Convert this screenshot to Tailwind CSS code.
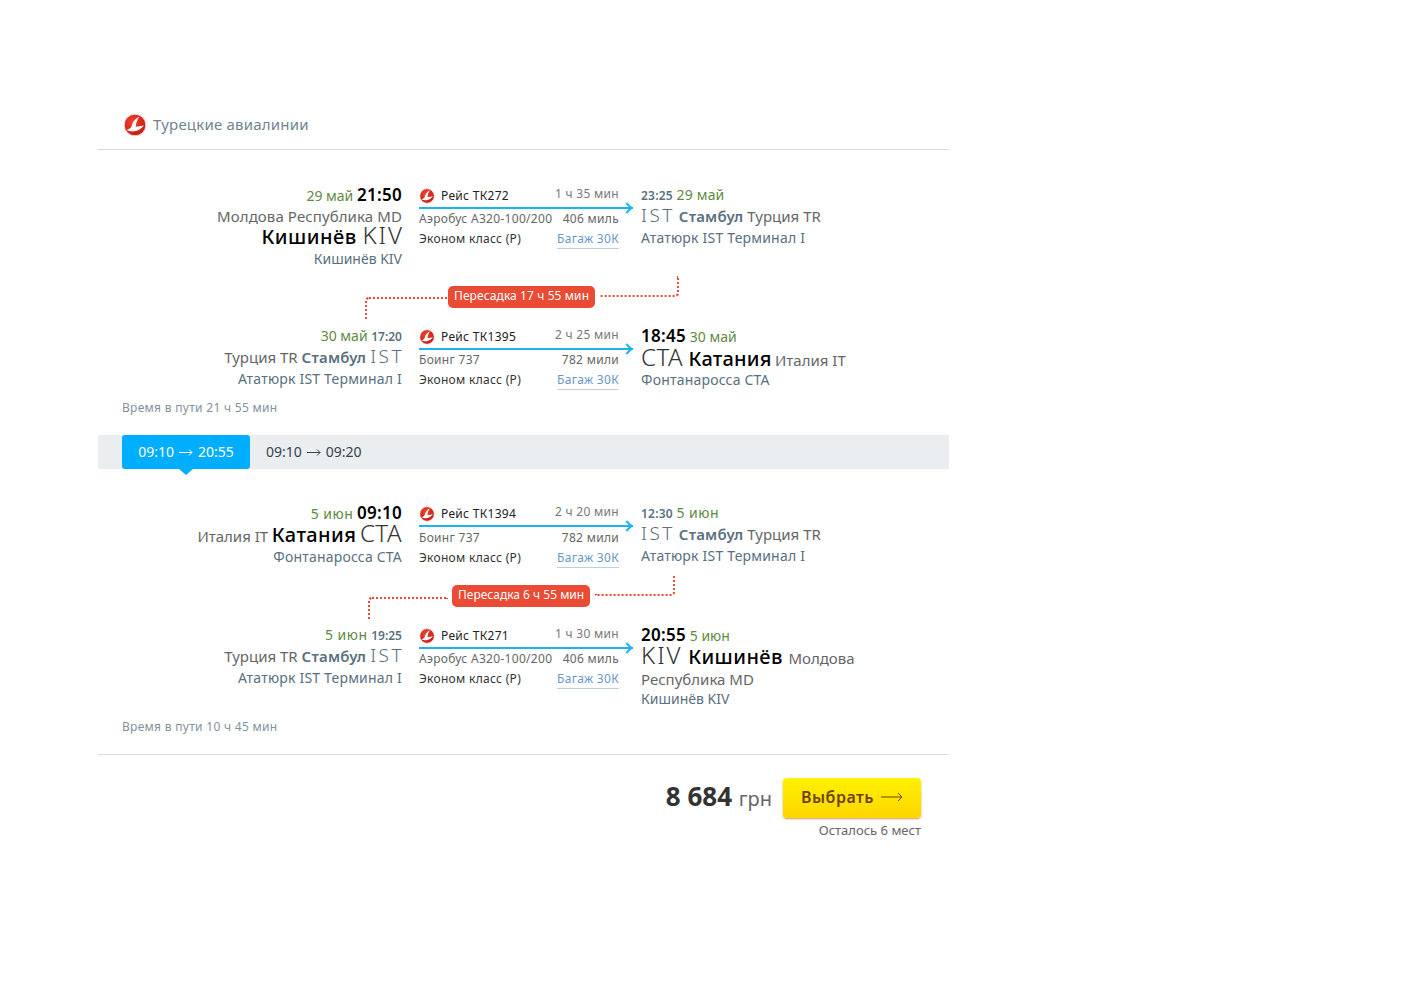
<!DOCTYPE html>
<html lang="ru">

<head>
  <meta charset="UTF-8" />
  <title>Турецкие авиалинии</title>
  <script src="https://cdn.jsdelivr.net/npm/@tailwindcss/browser@4"></script>
</head>

<body class="bg-white font-['Noto_Sans',sans-serif] text-[#555]">
  <svg class="absolute w-0 h-0">
    <defs>
      <radialGradient id="tkred" cx="40%" cy="35%" r="70%">
        <stop offset="0" stop-color="#f2442f" />
        <stop offset="1" stop-color="#c9140f" />
      </radialGradient>
    </defs>
    <symbol id="tk" viewBox="0 0 24 24">
      <circle cx="12" cy="12" r="10.800" fill="url(#tkred)" stroke="#eadcda" stroke-width="1" />
      <path d="M3.500 16.800c2-.3 4-1.300 5-3.300 1-4 3-7.500 8-10-2.500 3.500-3.500 6.500-3.700 10.300l8.200-1.300c-3 3.500-6 5.300-10 5.800-3 .3-5.500-.3-7.500-1.500z" fill="#fff" />
    </symbol>
  </svg>

  <div class="w-[851px] ml-[98px] pt-[110px]">
    <div class="h-[40px] border-b border-[#d5dadc] flex items-start pl-[25px] pt-[3px] gap-[6px]">
      <svg class="w-[24px] h-[24px]"><use href="#tk" /></svg>
      <span class="text-[15px] leading-[22px] tracking-[0.2px] text-[#708591]">Турецкие авиалинии</span>
    </div>

    <!-- туда -->
    <div class="flex h-[100px] mt-[36px]">
      <div class="w-[304px] text-right">
        <div class="h-[20px] leading-[18px] text-[14px]"><span class="text-[#5f8a45]">29 май</span> <span class="text-[17px] leading-none tracking-[0.3px] font-semibold text-black">21:50</span></div>
        <div class="h-[20px] leading-[20px] text-[15px] tracking-[0.1px] text-[#666]">Молдова Республика MD</div>
        <div class="h-[26px] -mt-[3px] leading-[14px] text-[20px] font-medium tracking-[0.5px] text-black">Кишинёв <span class="font-light leading-none text-[#333] text-[24px] tracking-[2px] -mr-[2px]">KIV</span></div>
        <div class="h-[22px] leading-[20px] text-[14px] text-[#5a7080]">Кишинёв KIV</div>
      </div>
      <div class="w-[214px] ml-[17px]">
        <div class="h-[20px] flex items-center justify-between pr-[14px]">
          <span class="flex items-center gap-[6px] text-[12px] tracking-[0.3px] text-[#222]"><svg class="w-[16px] h-[16px]"><use href="#tk" /></svg>Рейс ТК272</span>
          <span class="text-[12px] tracking-[0.3px] text-[#777] -mt-[4px]">1 ч 35 мин</span>
        </div>
        <div class="h-[2px] bg-[#1cb3f5] relative mt-[1px]"><span class="absolute right-[2px] top-[-3px] w-[8px] h-[8px] border-t-2 border-r-2 border-[#1cb3f5] rotate-45"></span></div>
        <div class="flex justify-between pr-[14px] h-[20px] leading-[20px] text-[12px] tracking-[0.3px] text-[#666]"><span>Аэробус А320-100/200</span><span>406 миль</span></div>
        <div class="flex justify-between pr-[14px] h-[20px] leading-[20px] text-[12px] tracking-[0.3px] text-[#333]"><span>Эконом класс (P)</span><span class="text-[#6896c5] border-b border-[#bcd0e0] h-[20px]">Багаж 30К</span></div>
      </div>
      <div class="ml-[8px] w-[240px]">
        <div class="h-[20px] leading-[18px] text-[14px]"><span class="text-[12px] tracking-[0.2px] font-semibold text-[#5a7080]">23:25</span> <span class="text-[#5f8a45] tracking-[0.2px]">29 май</span></div>
        <div class="h-[21px] leading-[19px] text-[15px] font-semibold text-[#5a7080]"><span class="font-light leading-none text-[19px] tracking-[2.500px]">IST</span> <span class="tracking-[0.2px]">Стамбул</span> <span class="font-normal text-[#666]">Турция TR</span></div>
        <div class="h-[21px] leading-[21px] text-[14px] tracking-[0.2px] text-[#5a7080]">Ататюрк IST Терминал I</div>
      </div>
    </div>

    <div class="relative h-[41px]">
      <div class="absolute left-[267px] top-[11px] w-[83px] h-[23px] border-l-2 border-t-2 border-dotted border-[#e94b35] rounded-tl-[4px]"></div>
      <div class="absolute left-[502px] top-[-10px] w-[79px] h-[21px] border-r-2 border-b-2 border-dotted border-[#e94b35] rounded-br-[4px]"></div>
      <span class="absolute left-[350px] top-[0px] h-[22px] leading-[20px] px-[6px] rounded-[5px] bg-[#e94b35] text-white text-[12px] tracking-[0.1px]">Пересадка 17 ч 55 мин</span>
    </div>

    <div class="flex h-[72px]">
      <div class="w-[304px] text-right">
        <div class="h-[20px] leading-[18px] text-[14px]"><span class="text-[#5f8a45]">30 май</span> <span class="text-[12px] font-semibold text-[#5a7080]">17:20</span></div>
        <div class="h-[21px] leading-[19px] text-[15px] text-[#666]">Турция TR <span class="font-semibold tracking-[0.2px] text-[#5a7080]">Стамбул</span> <span class="font-light leading-none text-[19px] tracking-[2.500px] -mr-[2px] text-[#5a7080]">IST</span></div>
        <div class="h-[21px] leading-[21px] text-[14px] tracking-[0.2px] text-[#5a7080]">Ататюрк IST Терминал I</div>
      </div>
      <div class="w-[214px] ml-[17px]">
        <div class="h-[20px] flex items-center justify-between pr-[14px]">
          <span class="flex items-center gap-[6px] text-[12px] tracking-[0.3px] text-[#222]"><svg class="w-[16px] h-[16px]"><use href="#tk" /></svg>Рейс ТК1395</span>
          <span class="text-[12px] tracking-[0.3px] text-[#777] -mt-[4px]">2 ч 25 мин</span>
        </div>
        <div class="h-[2px] bg-[#1cb3f5] relative mt-[1px]"><span class="absolute right-[2px] top-[-3px] w-[8px] h-[8px] border-t-2 border-r-2 border-[#1cb3f5] rotate-45"></span></div>
        <div class="flex justify-between pr-[14px] h-[20px] leading-[20px] text-[12px] tracking-[0.3px] text-[#666]"><span>Боинг 737</span><span>782 мили</span></div>
        <div class="flex justify-between pr-[14px] h-[20px] leading-[20px] text-[12px] tracking-[0.3px] text-[#333]"><span>Эконом класс (P)</span><span class="text-[#6896c5] border-b border-[#bcd0e0] h-[20px]">Багаж 30К</span></div>
      </div>
      <div class="ml-[8px] w-[240px]">
        <div class="h-[20px] leading-[18px] text-[14px]"><span class="text-[17px] leading-none tracking-[0.3px] font-semibold text-black">18:45</span> <span class="text-[#5f8a45]">30 май</span></div>
        <div class="h-[25px] -mt-[2px] leading-[16px] text-[20px] font-medium tracking-[0.2px] text-black"><span class="font-light leading-none text-[#333] text-[24px] tracking-[0.5px]">CTA</span> Катания <span class="font-normal text-[15px] tracking-normal text-[#666] -ml-[2px]">Италия IT</span></div>
        <div class="h-[21px] leading-[19px] text-[14px] tracking-[0.2px] text-[#5a7080]">Фонтанаросса CTA</div>
      </div>
    </div>

    <div class="h-[20px] leading-[18px] pl-[24px] text-[12px] tracking-[0.3px] text-[#7f929c]">Время в пути 21 ч 55 мин</div>

    <!-- обратно -->
    <div class="h-[34px] mt-[16px] bg-[#ebeef1] pl-[24px] flex items-stretch">
      <div class="relative w-[128px] rounded-[3px] bg-[#00aeff] text-white text-[14px] flex items-center justify-center gap-[5px] pb-[2px]"><span>09:10</span>
        <svg class="mt-[3px]" width="14" height="7" viewBox="0 0 14 7" fill="none" stroke="#fff"><path d="M0 3.500h13M10 .5l3 3-3 3" /></svg>
        <span>20:55</span>
        <span class="absolute left-[57px] bottom-[-6px] w-0 h-0 border-x-[7px] border-x-transparent border-t-[6px] border-t-[#00aeff]"></span>
      </div>
      <div class="ml-[16px] text-[14px] text-[#35424c] flex items-center gap-[5px] pb-[2px]"><span>09:10</span>
        <svg class="mt-[3px]" width="14" height="7" viewBox="0 0 14 7" fill="none" stroke="#35424c"><path d="M0 3.500h13M10 .5l3 3-3 3" /></svg>
        <span>09:20</span></div>
    </div>

    <div class="flex h-[71px] mt-[35px]">
      <div class="w-[304px] text-right">
        <div class="h-[20px] leading-[18px] text-[14px]"><span class="text-[#5f8a45] tracking-[0.5px]">5 июн</span> <span class="text-[17px] leading-none tracking-[0.3px] font-semibold text-black">09:10</span></div>
        <div class="h-[25px] -mt-[3px] leading-[14px] text-[20px] font-medium tracking-[0.4px] text-black"><span class="font-normal text-[15px] tracking-normal text-[#666] -mr-[2px]">Италия IT</span> Катания <span class="font-light leading-none text-[#333] text-[24px] tracking-[0.5px] -ml-[2px]">CTA</span></div>
        <div class="h-[21px] leading-[21px] text-[14px] tracking-[0.2px] text-[#5a7080]">Фонтанаросса CTA</div>
      </div>
      <div class="w-[214px] ml-[17px]">
        <div class="h-[20px] flex items-center justify-between pr-[14px]">
          <span class="flex items-center gap-[6px] text-[12px] tracking-[0.3px] text-[#222]"><svg class="w-[16px] h-[16px]"><use href="#tk" /></svg>Рейс ТК1394</span>
          <span class="text-[12px] tracking-[0.3px] text-[#777] -mt-[4px]">2 ч 20 мин</span>
        </div>
        <div class="h-[2px] bg-[#1cb3f5] relative mt-[1px]"><span class="absolute right-[2px] top-[-3px] w-[8px] h-[8px] border-t-2 border-r-2 border-[#1cb3f5] rotate-45"></span></div>
        <div class="flex justify-between pr-[14px] mt-[1px] h-[20px] leading-[20px] text-[12px] tracking-[0.3px] text-[#666]"><span>Боинг 737</span><span>782 мили</span></div>
        <div class="flex justify-between pr-[14px] h-[20px] leading-[20px] text-[12px] tracking-[0.3px] text-[#333]"><span>Эконом класс (P)</span><span class="text-[#6896c5] border-b border-[#bcd0e0] h-[20px]">Багаж 30К</span></div>
      </div>
      <div class="ml-[8px] w-[240px]">
        <div class="h-[20px] leading-[18px] text-[14px]"><span class="text-[12px] tracking-[0.2px] font-semibold text-[#5a7080]">12:30</span> <span class="text-[#5f8a45] tracking-[0.5px]">5 июн</span></div>
        <div class="h-[21px] leading-[19px] text-[15px] font-semibold text-[#5a7080]"><span class="font-light leading-none text-[19px] tracking-[2.500px]">IST</span> <span class="tracking-[0.2px]">Стамбул</span> <span class="font-normal text-[#666]">Турция TR</span></div>
        <div class="h-[21px] leading-[21px] text-[14px] tracking-[0.2px] text-[#5a7080]">Ататюрк IST Терминал I</div>
      </div>
    </div>

    <div class="relative h-[51px]">
      <div class="absolute left-[270px] top-[22px] w-[80px] h-[22px] border-l-2 border-t-2 border-dotted border-[#e94b35] rounded-tl-[4px]"></div>
      <div class="absolute left-[497px] top-[0px] w-[80px] h-[21px] border-r-2 border-b-2 border-dotted border-[#e94b35] rounded-br-[4px]"></div>
      <span class="absolute left-[354px] top-[10px] h-[22px] leading-[20px] px-[6px] rounded-[5px] bg-[#e94b35] text-white text-[12px]">Пересадка 6 ч 55 мин</span>
    </div>

    <div class="flex h-[91px]">
      <div class="w-[304px] text-right">
        <div class="h-[20px] leading-[18px] text-[14px]"><span class="text-[#5f8a45] tracking-[0.5px]">5 июн</span> <span class="text-[12px] font-semibold text-[#5a7080]">19:25</span></div>
        <div class="h-[21px] leading-[19px] text-[15px] text-[#666]">Турция TR <span class="font-semibold tracking-[0.2px] text-[#5a7080]">Стамбул</span> <span class="font-light leading-none text-[19px] tracking-[2.500px] -mr-[2px] text-[#5a7080]">IST</span></div>
        <div class="h-[21px] leading-[21px] text-[14px] tracking-[0.2px] text-[#5a7080]">Ататюрк IST Терминал I</div>
      </div>
      <div class="w-[214px] ml-[17px]">
        <div class="h-[20px] flex items-center justify-between pr-[14px]">
          <span class="flex items-center gap-[6px] text-[12px] tracking-[0.3px] text-[#222]"><svg class="w-[16px] h-[16px]"><use href="#tk" /></svg>Рейс ТК271</span>
          <span class="text-[12px] tracking-[0.3px] text-[#777] -mt-[4px]">1 ч 30 мин</span>
        </div>
        <div class="h-[2px] bg-[#1cb3f5] relative mt-[1px]"><span class="absolute right-[2px] top-[-3px] w-[8px] h-[8px] border-t-2 border-r-2 border-[#1cb3f5] rotate-45"></span></div>
        <div class="flex justify-between pr-[14px] h-[20px] leading-[20px] text-[12px] tracking-[0.3px] text-[#666]"><span>Аэробус А320-100/200</span><span>406 миль</span></div>
        <div class="flex justify-between pr-[14px] h-[20px] leading-[20px] text-[12px] tracking-[0.3px] text-[#333]"><span>Эконом класс (P)</span><span class="text-[#6896c5] border-b border-[#bcd0e0] h-[20px]">Багаж 30К</span></div>
      </div>
      <div class="ml-[8px] w-[240px]">
        <div class="h-[20px] leading-[18px] text-[14px]"><span class="text-[17px] leading-none tracking-[0.3px] font-semibold text-black">20:55</span> <span class="text-[#5f8a45]">5 июн</span></div>
        <div class="h-[26px] -mt-[3px] leading-[12px] text-[20px] font-medium tracking-[0.4px] text-black"><span class="font-light leading-none text-[#333] text-[24px] tracking-[2px]">KIV</span> Кишинёв <span class="font-normal text-[15px] tracking-normal text-[#666]">Молдова</span></div>
        <div class="h-[20px] leading-[20px] text-[15px] text-[#666]">Республика MD</div>
        <div class="h-[20px] leading-[20px] text-[14px] text-[#5a7080]">Кишинёв KIV</div>
      </div>
    </div>

    <div class="h-[38px] leading-[20px] pl-[24px] text-[12px] tracking-[0.3px] text-[#7f929c] border-b border-[#d5dfe4]">Время в пути 10 ч 45 мин</div>

    <div class="flex justify-end items-center gap-[11px] pr-[28px] mt-[23px]">
      <div class="text-[#333] font-bold text-[26px] leading-[34px] -mt-[2px]">8 684 <span class="font-normal text-[20px] text-[#666]">грн</span></div>
      <div class="w-[138px] h-[40px] rounded-[4px] bg-gradient-to-b from-[#fff200] to-[#ffd500] shadow-[0_1px_2px_rgba(190,120,0,0.7)] flex items-center justify-center gap-[7px] text-[#6b4300] text-[16px] tracking-[0.5px] font-semibold pb-[2px]">Выбрать
        <svg width="22" height="10" viewBox="0 0 22 10" fill="none" stroke="#6b4300"><path d="M0 5h21M17 1l4 4-4 4" /></svg>
      </div>
    </div>
    <div class="pr-[28px] text-right text-[13px] leading-[24px] text-[#666]">Осталось 6 мест</div>
  </div>
</body>

</html>
